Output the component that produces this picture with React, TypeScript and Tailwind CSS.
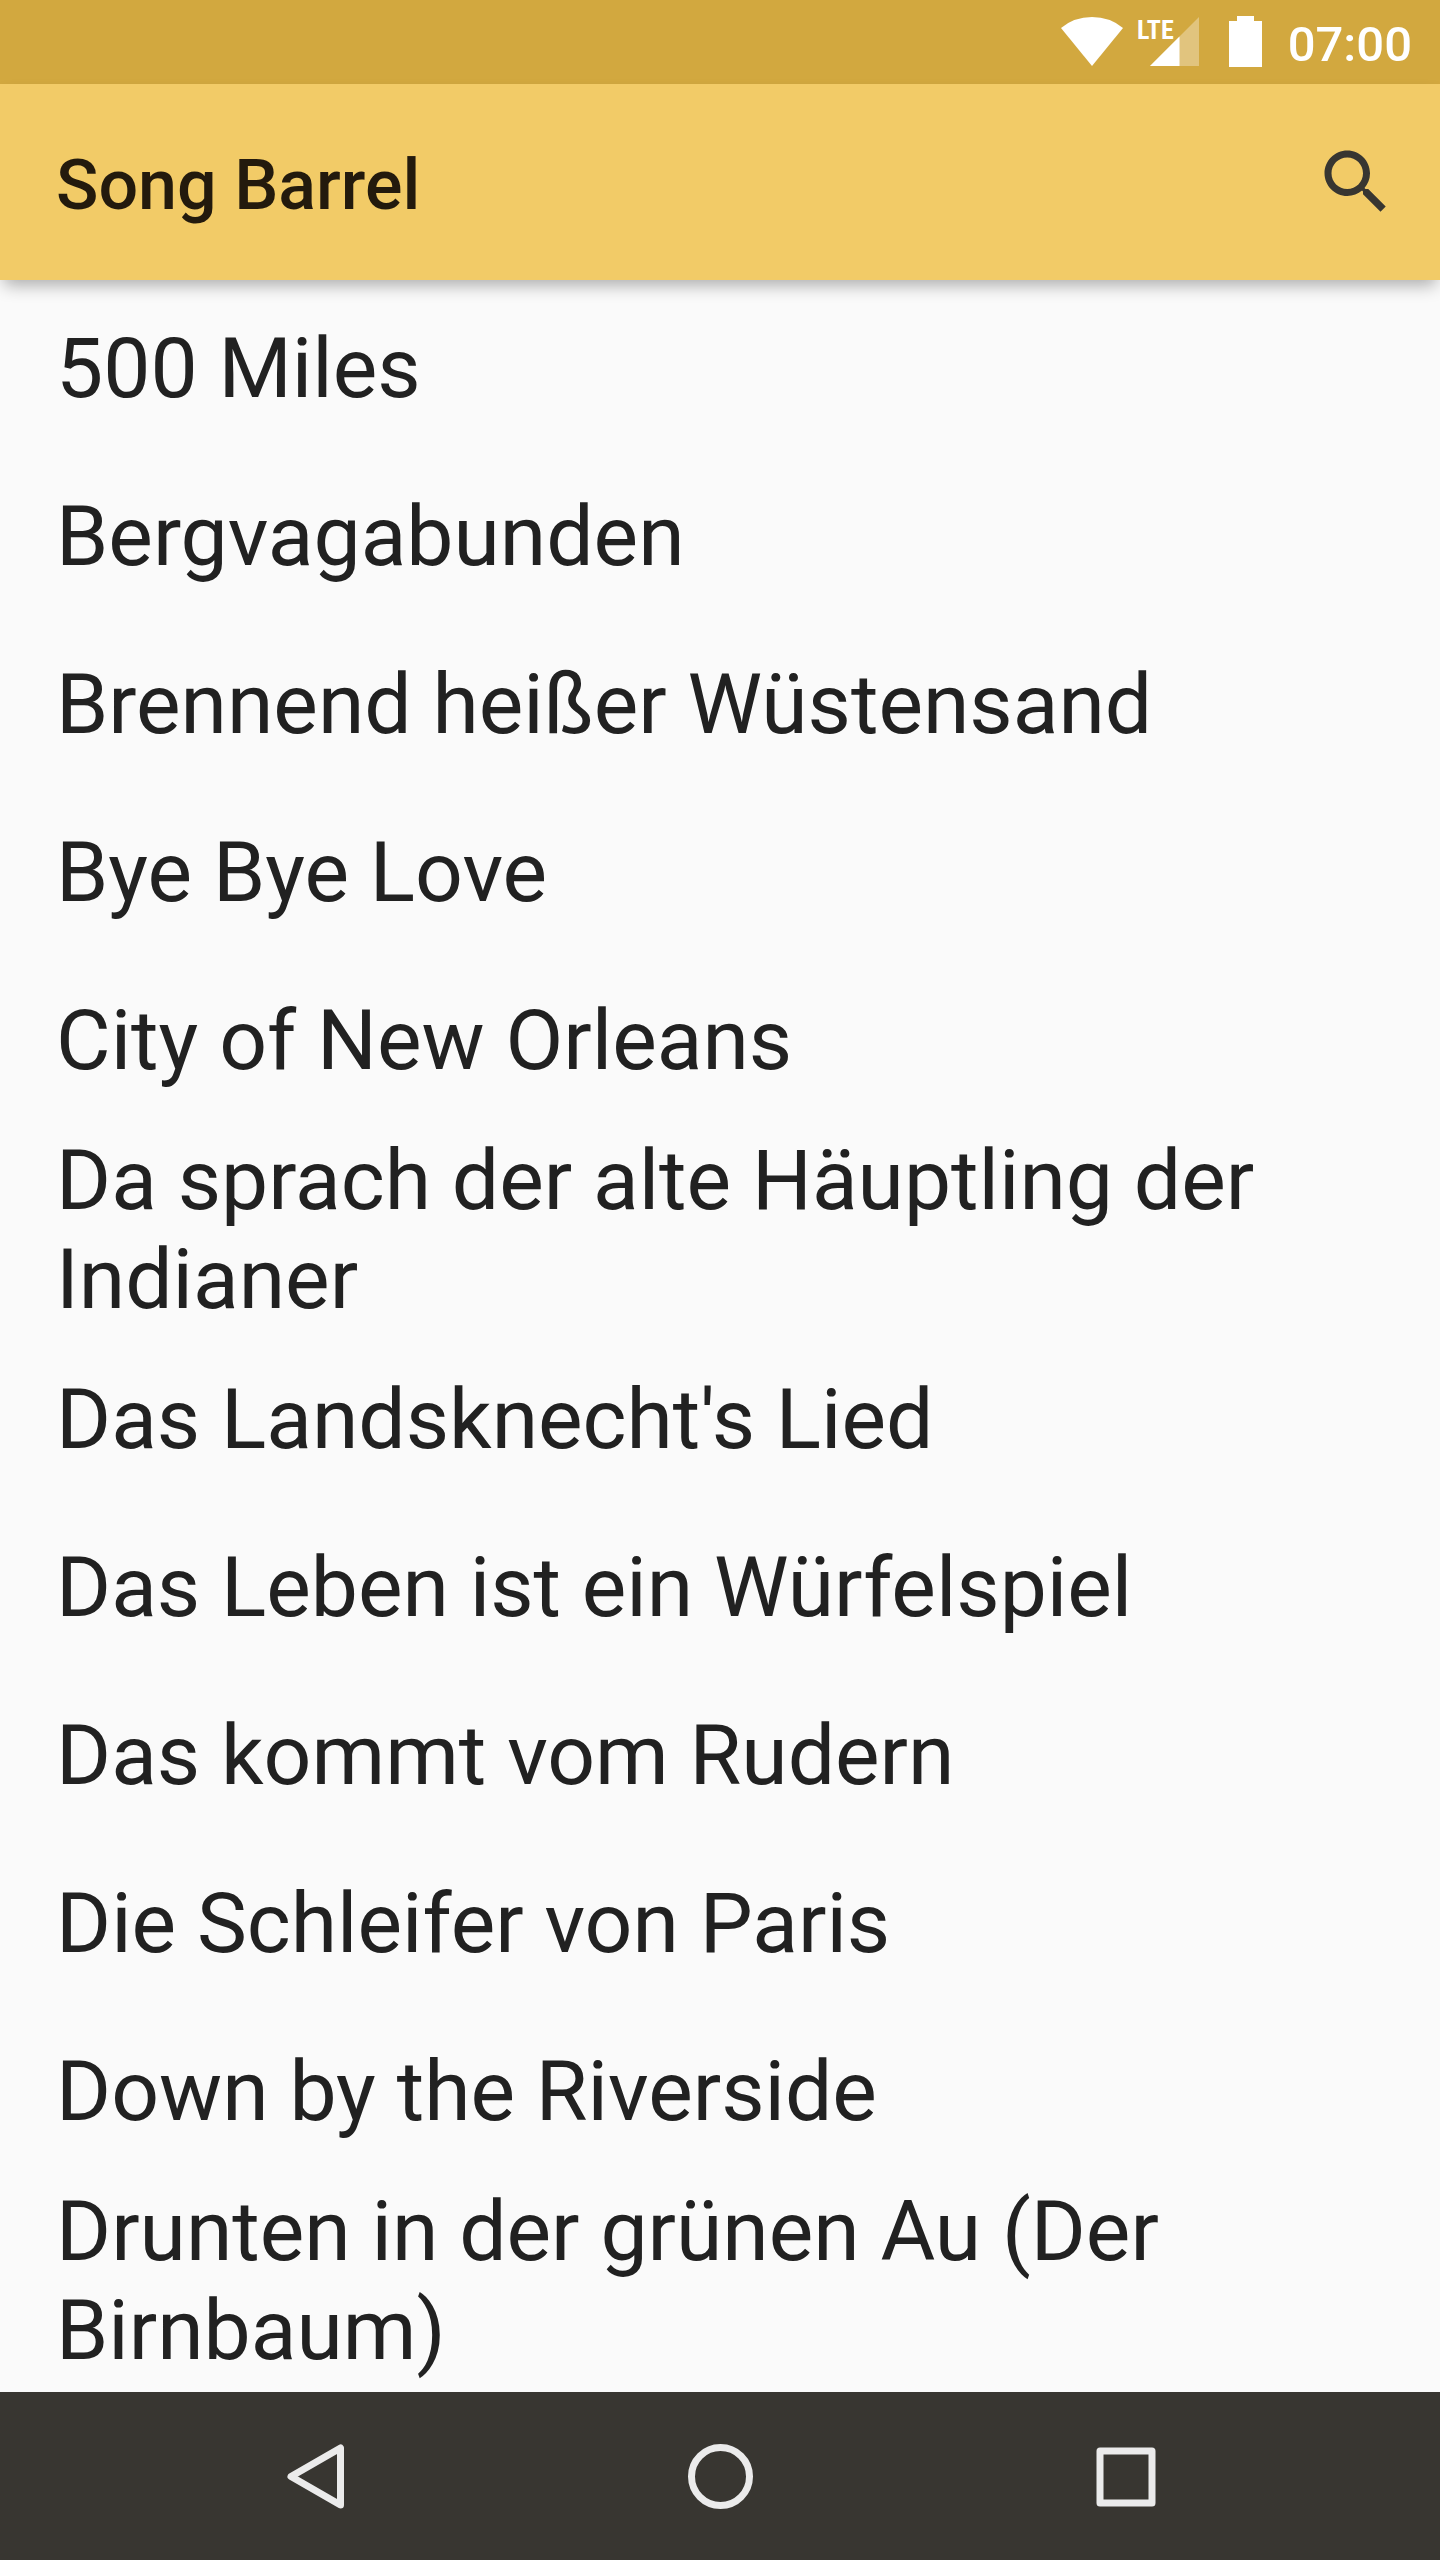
import React from "react";

const songs = [
  "500 Miles",
  "Bergvagabunden",
  "Brennend heißer Wüstensand",
  "Bye Bye Love",
  "City of New Orleans",
  "Da sprach der alte Häuptling der Indianer",
  "Das Landsknecht's Lied",
  "Das Leben ist ein Würfelspiel",
  "Das kommt vom Rudern",
  "Die Schleifer von Paris",
  "Down by the Riverside",
  "Drunten in der grünen Au (Der Birnbaum)",
];

function StatusBar() {
  return (
    <div className="flex h-[84px] shrink-0 items-center justify-end bg-[#d2a83f] pr-7 text-white">
      <svg className="h-[84px] w-[220px]" viewBox="1052 0 220 84" fill="#fff" aria-hidden="true">
        <path d="M1092 66 1061 28Q1074 17 1092 17T1123 28Z" />
        <path d="M1199 17V66H1150Z" opacity=".33" />
        <path d="M1179.500 36.500V66H1150Z" />
        <path d="M1237 16h17v5h8v46h-33V21h8Z" />
        <text x="1137" y="39" fontFamily="'Roboto Condensed', 'Liberation Sans Narrow', Roboto, sans-serif" fontSize="26" fontWeight="700">LTE</text>
      </svg>
      <time className="ml-4 pt-1 text-[49px] leading-none font-medium">07:00</time>
    </div>
  );
}

export default function App() {
  return (
    <div className="flex h-screen flex-col overflow-hidden bg-[#fafafa] font-['Roboto',sans-serif] text-[#212121]">
      <StatusBar />
      <header className="z-10 flex h-[196px] shrink-0 items-center justify-between bg-[#f2cb67] pr-[42px] pl-14 shadow-[0_9px_16px_-4px_rgba(0,0,0,0.32)]">
        <h1 className="pt-1.5 text-[70px] leading-[84px] font-medium text-[#231a0d]">Song Barrel</h1>
        <button type="button" aria-label="Search" className="text-[#383631]">
          <svg className="size-[84px]" viewBox="0 0 24 24" fill="currentColor" aria-hidden="true">
            <path d="M15.5 14h-.79l-.28-.27C15.41 12.59 16 11.11 16 9.5 16 5.91 13.09 3 9.5 3S3 5.91 3 9.5 5.91 16 9.5 16c1.61 0 3.09-.59 4.23-1.57l.27.28v.79l5 4.99L20.49 19l-4.99-5zm-6 0C7.01 14 5 11.99 5 9.5S7.01 5 9.5 5 14 7.01 14 9.5 11.99 14 9.5 14z" />
          </svg>
        </button>
      </header>
      <main className="min-h-0 flex-1 overflow-hidden">
        <ul>
          {songs.map((song) => (
            <li key={song} className="flex min-h-[168px] items-center px-14 pt-[11px] pb-[2px] text-[84px] leading-[99px]">
              {song}
            </li>
          ))}
        </ul>
      </main>
      <nav className="flex h-[168px] shrink-0 items-center justify-center gap-[321px] bg-[#383631]">
        <button type="button" aria-label="Back">
          <svg className="size-[84px]" viewBox="0 0 84 84" fill="none" stroke="#ebebeb" strokeWidth="7" strokeLinejoin="round" aria-hidden="true">
            <path d="M67.500 14V71L18 42.500Z" />
          </svg>
        </button>
        <button type="button" aria-label="Home">
          <svg className="size-[84px]" viewBox="0 0 84 84" fill="none" stroke="#ebebeb" strokeWidth="7" aria-hidden="true">
            <circle cx="42.500" cy="42.500" r="29" />
          </svg>
        </button>
        <button type="button" aria-label="Recent apps">
          <svg className="size-[84px]" viewBox="0 0 84 84" fill="none" stroke="#ebebeb" strokeWidth="7" strokeLinejoin="round" aria-hidden="true">
            <rect x="17" y="17" width="52" height="52" />
          </svg>
        </button>
      </nav>
    </div>
  );
}
